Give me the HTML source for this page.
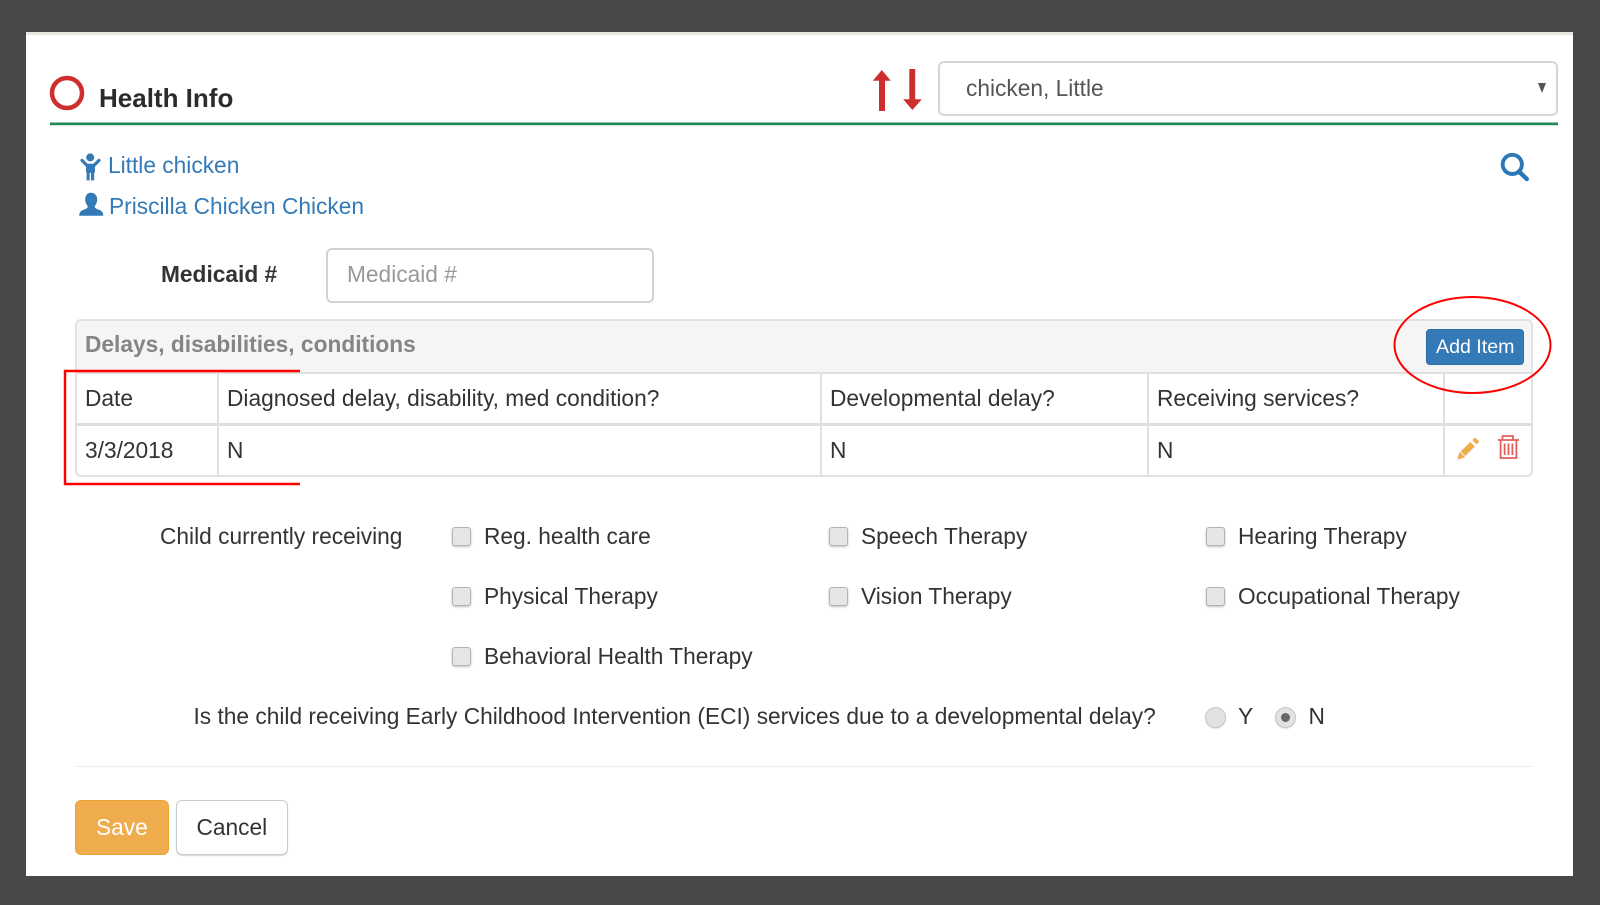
<!DOCTYPE html>
<html><head><meta charset="utf-8"><title>Health Info</title>
<style>
html,body{margin:0;padding:0;width:1600px;height:905px;overflow:hidden;background:#484848}
body{position:relative;font-family:"Liberation Sans",sans-serif;font-size:22.72px;color:#333}
#w{position:absolute;left:0;top:0;width:1600px;height:905px;background:#484848;filter:blur(.35px)}
.a{position:absolute;box-sizing:border-box}
.t{position:absolute;line-height:30px;height:30px;white-space:nowrap}
.l{color:#337ab7}
.cb{position:absolute;width:19px;height:19px;box-sizing:border-box;background:#e6e6e6;border:1px solid #b4b4b4;border-radius:3px;box-shadow:0 1px 2px rgba(0,0,0,.25)}
.r{position:absolute;width:21px;height:21px;box-sizing:border-box;background:#e2e2e2;border:1px solid #c4c4c4;border-radius:50%;box-shadow:0 1px 1px rgba(0,0,0,.12)}
svg{position:absolute;left:0;top:0}
</style></head><body><div id="w">
<div class="a" style="left:26px;top:32px;width:1547px;height:844px;background:#fff;border-top:3px solid #e9e8de"></div>

<div class="t" style="left:99px;top:83px;font-size:26px;font-weight:bold;color:#2b2b2b">Health Info</div>

<div class="a" style="left:938px;top:61px;width:620px;height:55px;border:2px solid #d6d6d6;border-radius:6px;background:#fff"></div>
<div class="t" style="left:966px;top:73px;color:#555">chicken, Little</div>
<div class="a" style="left:1538px;top:83px;width:0;height:0;border-left:4.5px solid transparent;border-right:4.5px solid transparent;border-top:10px solid #555"></div>

<div class="t l" style="left:108px;top:150px">Little chicken</div>
<div class="t l" style="left:109px;top:191px">Priscilla Chicken Chicken</div>

<div class="t" style="left:161px;top:259px;font-weight:bold">Medicaid #</div>
<div class="a" style="left:326px;top:247.5px;width:328px;height:55px;border:2px solid #d2d2d2;border-radius:6px;background:#fff"></div>
<div class="t" style="left:347px;top:259px;color:#999">Medicaid #</div>

<!-- panel -->
<div class="a" style="left:75px;top:319px;width:1458px;height:158px;border:2px solid #e2e2e2;border-radius:6px;background:#fff"></div>
<div class="a" style="left:77px;top:321px;width:1454px;height:51px;background:#f5f5f5;border-radius:4px 4px 0 0"></div>
<div class="a" style="left:77px;top:372px;width:1454px;height:2px;background:#e0e0e0"></div>
<div class="a" style="left:77px;top:423px;width:1454px;height:3px;background:#dedede"></div>
<div class="a" style="left:217px;top:374px;width:1.6px;height:101px;background:#e0e0e0"></div>
<div class="a" style="left:820px;top:374px;width:1.6px;height:101px;background:#e0e0e0"></div>
<div class="a" style="left:1147px;top:374px;width:1.6px;height:101px;background:#e0e0e0"></div>
<div class="a" style="left:1443px;top:374px;width:1.6px;height:101px;background:#e0e0e0"></div>
<div class="t" style="left:85px;top:329px;font-weight:bold;color:#858585">Delays, disabilities, conditions</div>

<div class="a" style="left:1426px;top:329px;width:98px;height:36px;background:#337ab7;border:1px solid #2e6da4;border-radius:4px"></div>
<div class="t" style="left:1436px;top:332px;color:#fff;font-size:19.6px">Add Item</div>

<div class="t" style="left:85px;top:383px">Date</div>
<div class="t" style="left:227px;top:383px">Diagnosed delay, disability, med condition?</div>
<div class="t" style="left:830px;top:383px">Developmental delay?</div>
<div class="t" style="left:1157px;top:383px">Receiving services?</div>
<div class="t" style="left:85px;top:435px">3/3/2018</div>
<div class="t" style="left:227px;top:435px">N</div>
<div class="t" style="left:830px;top:435px">N</div>
<div class="t" style="left:1157px;top:435px">N</div>

<!-- checkboxes -->
<div class="t" style="left:160px;top:521px">Child currently receiving</div>
<div class="cb" style="left:452px;top:527px"></div><div class="t" style="left:484px;top:521px">Reg. health care</div>
<div class="cb" style="left:829px;top:527px"></div><div class="t" style="left:861px;top:521px">Speech Therapy</div>
<div class="cb" style="left:1206px;top:527px"></div><div class="t" style="left:1238px;top:521px">Hearing Therapy</div>
<div class="cb" style="left:452px;top:587px"></div><div class="t" style="left:484px;top:581px">Physical Therapy</div>
<div class="cb" style="left:829px;top:587px"></div><div class="t" style="left:861px;top:581px">Vision Therapy</div>
<div class="cb" style="left:1206px;top:587px"></div><div class="t" style="left:1238px;top:581px">Occupational Therapy</div>
<div class="cb" style="left:452px;top:647px"></div><div class="t" style="left:484px;top:641px">Behavioral Health Therapy</div>

<div class="t" style="left:193.5px;top:701px">Is the child receiving Early Childhood Intervention (ECI) services due to a developmental delay?</div>
<div class="r" style="left:1205px;top:707px"></div><div class="t" style="left:1238px;top:701px">Y</div>
<div class="r" style="left:1275px;top:707px"></div>
<div class="a" style="left:1281px;top:713px;width:9px;height:9px;border-radius:50%;background:#666"></div>
<div class="t" style="left:1308.5px;top:701px">N</div>

<div class="a" style="left:75px;top:766px;width:1458px;height:1px;background:#eee"></div>

<div class="a" style="left:75px;top:800px;width:94px;height:55px;background:#f0ad4e;border:1px solid #eea236;border-radius:6px"></div>
<div class="t" style="left:96px;top:812px;color:#fff">Save</div>
<div class="a" style="left:176px;top:800px;width:112px;height:55px;background:#fff;border:1.6px solid #ccc;border-radius:6px;box-shadow:0 1px 1px rgba(0,0,0,.15)"></div>
<div class="t" style="left:196.5px;top:812px">Cancel</div>

<svg width="1600" height="905" viewBox="0 0 1600 905" fill="none">
<!-- green rule -->
<rect x="50" y="122.5" width="1508" height="2.7" fill="#1e8a55"/>
<!-- ring -->
<circle cx="67" cy="93" r="15" stroke="#cf2e2e" stroke-width="4.5"/>
<!-- arrows -->
<path d="M881.8 70L890.8 80.7H885V111H879V80.7H872.8Z" fill="#cf2e2e"/>
<path d="M909.3 69H915.2V99.3H921.8L912.4 110L903.2 99.3H909.3Z" fill="#cf2e2e"/>
<!-- search -->
<circle cx="1512.3" cy="164.4" r="9.6" stroke="#2b78b8" stroke-width="3.9"/>
<path d="M1519.5 172L1526.8 179" stroke="#2b78b8" stroke-width="4.4" stroke-linecap="round"/>
<!-- child -->
<circle cx="90.2" cy="157.4" r="4" fill="#337ab7"/>
<path d="M82 160.4L87 165.4H94L99 160.4" stroke="#337ab7" stroke-width="3.2" stroke-linecap="round"/>
<path d="M86 164.4H95V172.4H94.2V180.4H91V173H89.7V180.4H86.6V172.4H86Z" fill="#337ab7"/>
<!-- adult -->
<path d="M91 192.7C95.7 192.7 97.2 196.5 97.2 199.5C97.2 202.5 95.7 205 94.7 206.2C94.7 208.2 96.5 208.8 99 209.8C101.7 210.8 103.3 212.5 103.3 215.8H79.2C79.2 212.5 80.8 210.8 83.5 209.8C86 208.8 87.8 208.2 87.8 206.2C86.8 205 85.2 202.5 85.2 199.5C85.2 196.5 86.5 192.7 91 192.7Z" fill="#337ab7"/>
<!-- red annotations -->
<ellipse cx="1472.5" cy="345" rx="78" ry="48" stroke="#f00" stroke-width="2"/>
<path d="M300 371H65V484H300" stroke="#f00" stroke-width="2.4"/>
<!-- pencil -->
<path d="M1457.2 459.6L1459.6 451.6L1465.2 457.2Z" fill="#f0ad4e"/>
<path d="M1463 453.7L1472.6 444.1" stroke="#f0ad4e" stroke-width="6.4"/>
<path d="M1474.4 442.3L1477.2 439.5" stroke="#f0ad4e" stroke-width="6"/>
<!-- trash -->
<g stroke="#e0605c" stroke-width="1.8">
<path d="M1497.8 440H1519"/>
<path d="M1502.5 440V436H1513V440"/>
<path d="M1500.6 440.5V458H1516.4V440.5"/>
<path d="M1504.6 443.5V455M1508.5 443.5V455M1512.4 443.5V455"/>
</g>
</svg>
</div></body></html>
